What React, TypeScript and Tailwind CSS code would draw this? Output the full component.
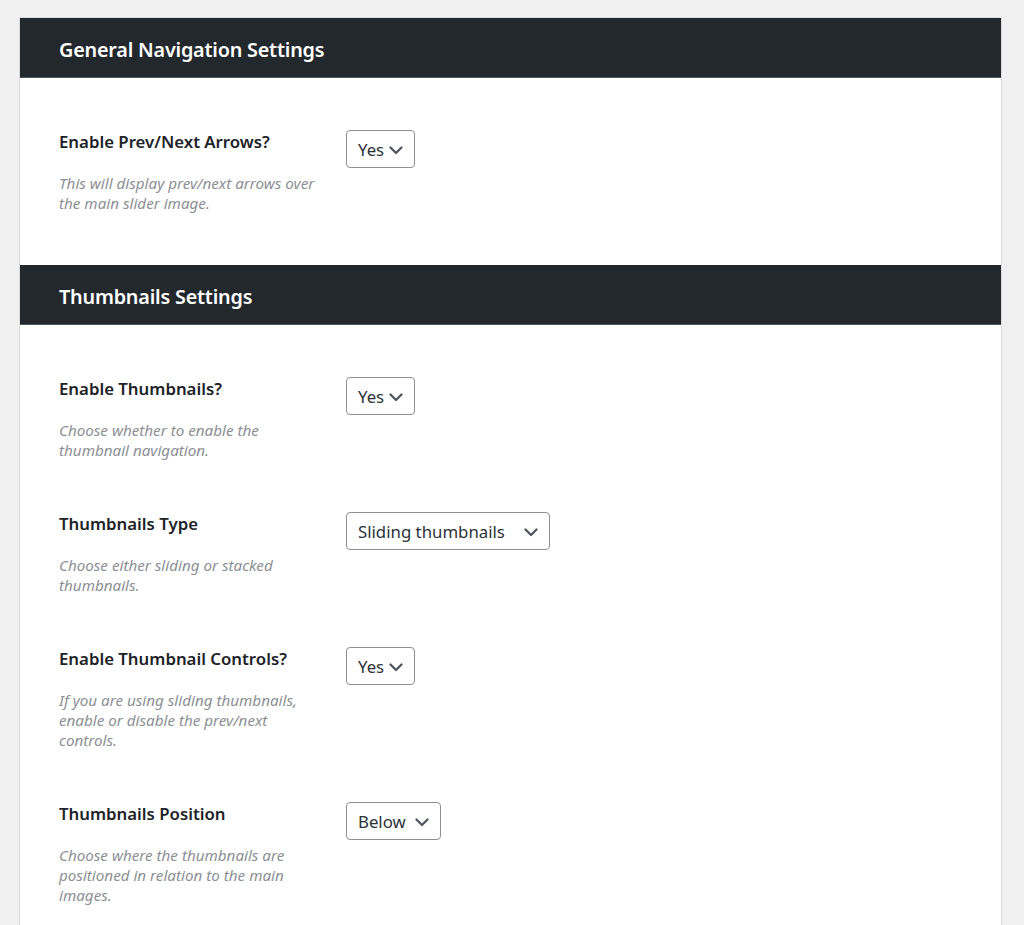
import React from 'react';

type Row = {
    label: string;
    lines: string[];
    value: string;
    width: string;
};

const sections: { title: string; rows: Row[] }[] = [
    {
        title: 'General Navigation Settings',
        rows: [
            {
                label: 'Enable Prev/Next Arrows?',
                lines: ['This will display prev/next arrows over', 'the main slider image.'],
                value: 'Yes',
                width: 'w-[69px]',
            },
        ],
    },
    {
        title: 'Thumbnails Settings',
        rows: [
            {
                label: 'Enable Thumbnails?',
                lines: ['Choose whether to enable the', 'thumbnail navigation.'],
                value: 'Yes',
                width: 'w-[69px]',
            },
            {
                label: 'Thumbnails Type',
                lines: ['Choose either sliding or stacked', 'thumbnails.'],
                value: 'Sliding thumbnails',
                width: 'w-[204px]',
            },
            {
                label: 'Enable Thumbnail Controls?',
                lines: ['If you are using sliding thumbnails,', 'enable or disable the prev/next', 'controls.'],
                value: 'Yes',
                width: 'w-[69px]',
            },
            {
                label: 'Thumbnails Position',
                lines: ['Choose where the thumbnails are', 'positioned in relation to the main', 'images.'],
                value: 'Below',
                width: 'w-[95px]',
            },
        ],
    },
];

function Chevron() {
    return (
        <svg width="14" height="9" viewBox="0 0 14 9" fill="none" className="shrink-0">
            <path d="M1.5 1.5L7 7L12.5 1.5" stroke="#50575e" strokeWidth="2.3" strokeLinecap="round" strokeLinejoin="round" />
        </svg>
    );
}

function FakeSelect({ value, width }: { value: string; width: string }) {
    return (
        <div
            className={`${width} h-[38px] flex items-center justify-between pl-[11px] pr-[11px] pt-[2px] border border-[#8c8f94] rounded-[4px] bg-white text-[16.8px] text-[#2c3338]`}
        >
            <span>{value}</span>
            <Chevron />
        </div>
    );
}

function SettingRow({ row }: { row: Row }) {
    return (
        <div className="flex items-start">
            <div className="w-[287px] shrink-0">
                <div className="text-[16.8px] leading-[24px] font-semibold text-[#1d2327]">{row.label}</div>
                <p className="mt-[19px] text-[15.2px] leading-[20px] italic text-[#8c8f94]">
                    {row.lines.map((line) => (
                        <span key={line} className="block whitespace-nowrap">
                            {line}
                        </span>
                    ))}
                </p>
            </div>
            <FakeSelect value={row.value} width={row.width} />
        </div>
    );
}

export default function App() {
    return (
        <div className="min-h-[925px] bg-[#f0f0f1] pt-[17px] pl-[19px] pr-[22px]" style={{ fontFamily: '"Noto Sans", "Open Sans", sans-serif' }}>
            <div className="bg-white border-x border-t border-[#dcdcde] min-h-[908px]">
                {sections.map((section) => (
                    <div key={section.title}>
                        <div className="h-[60px] bg-[#23282d] border-b border-[#50575e] flex items-center pl-[39px] pt-[4px]">
                            <h2 className="text-[19.8px] font-semibold text-white tracking-[-0.2px]">{section.title}</h2>
                        </div>
                        <div className="flex flex-col gap-[52px] py-[52px] pl-[39px]">
                            {section.rows.map((row) => (
                                <SettingRow key={row.label} row={row} />
                            ))}
                        </div>
                    </div>
                ))}
            </div>
        </div>
    );
}
